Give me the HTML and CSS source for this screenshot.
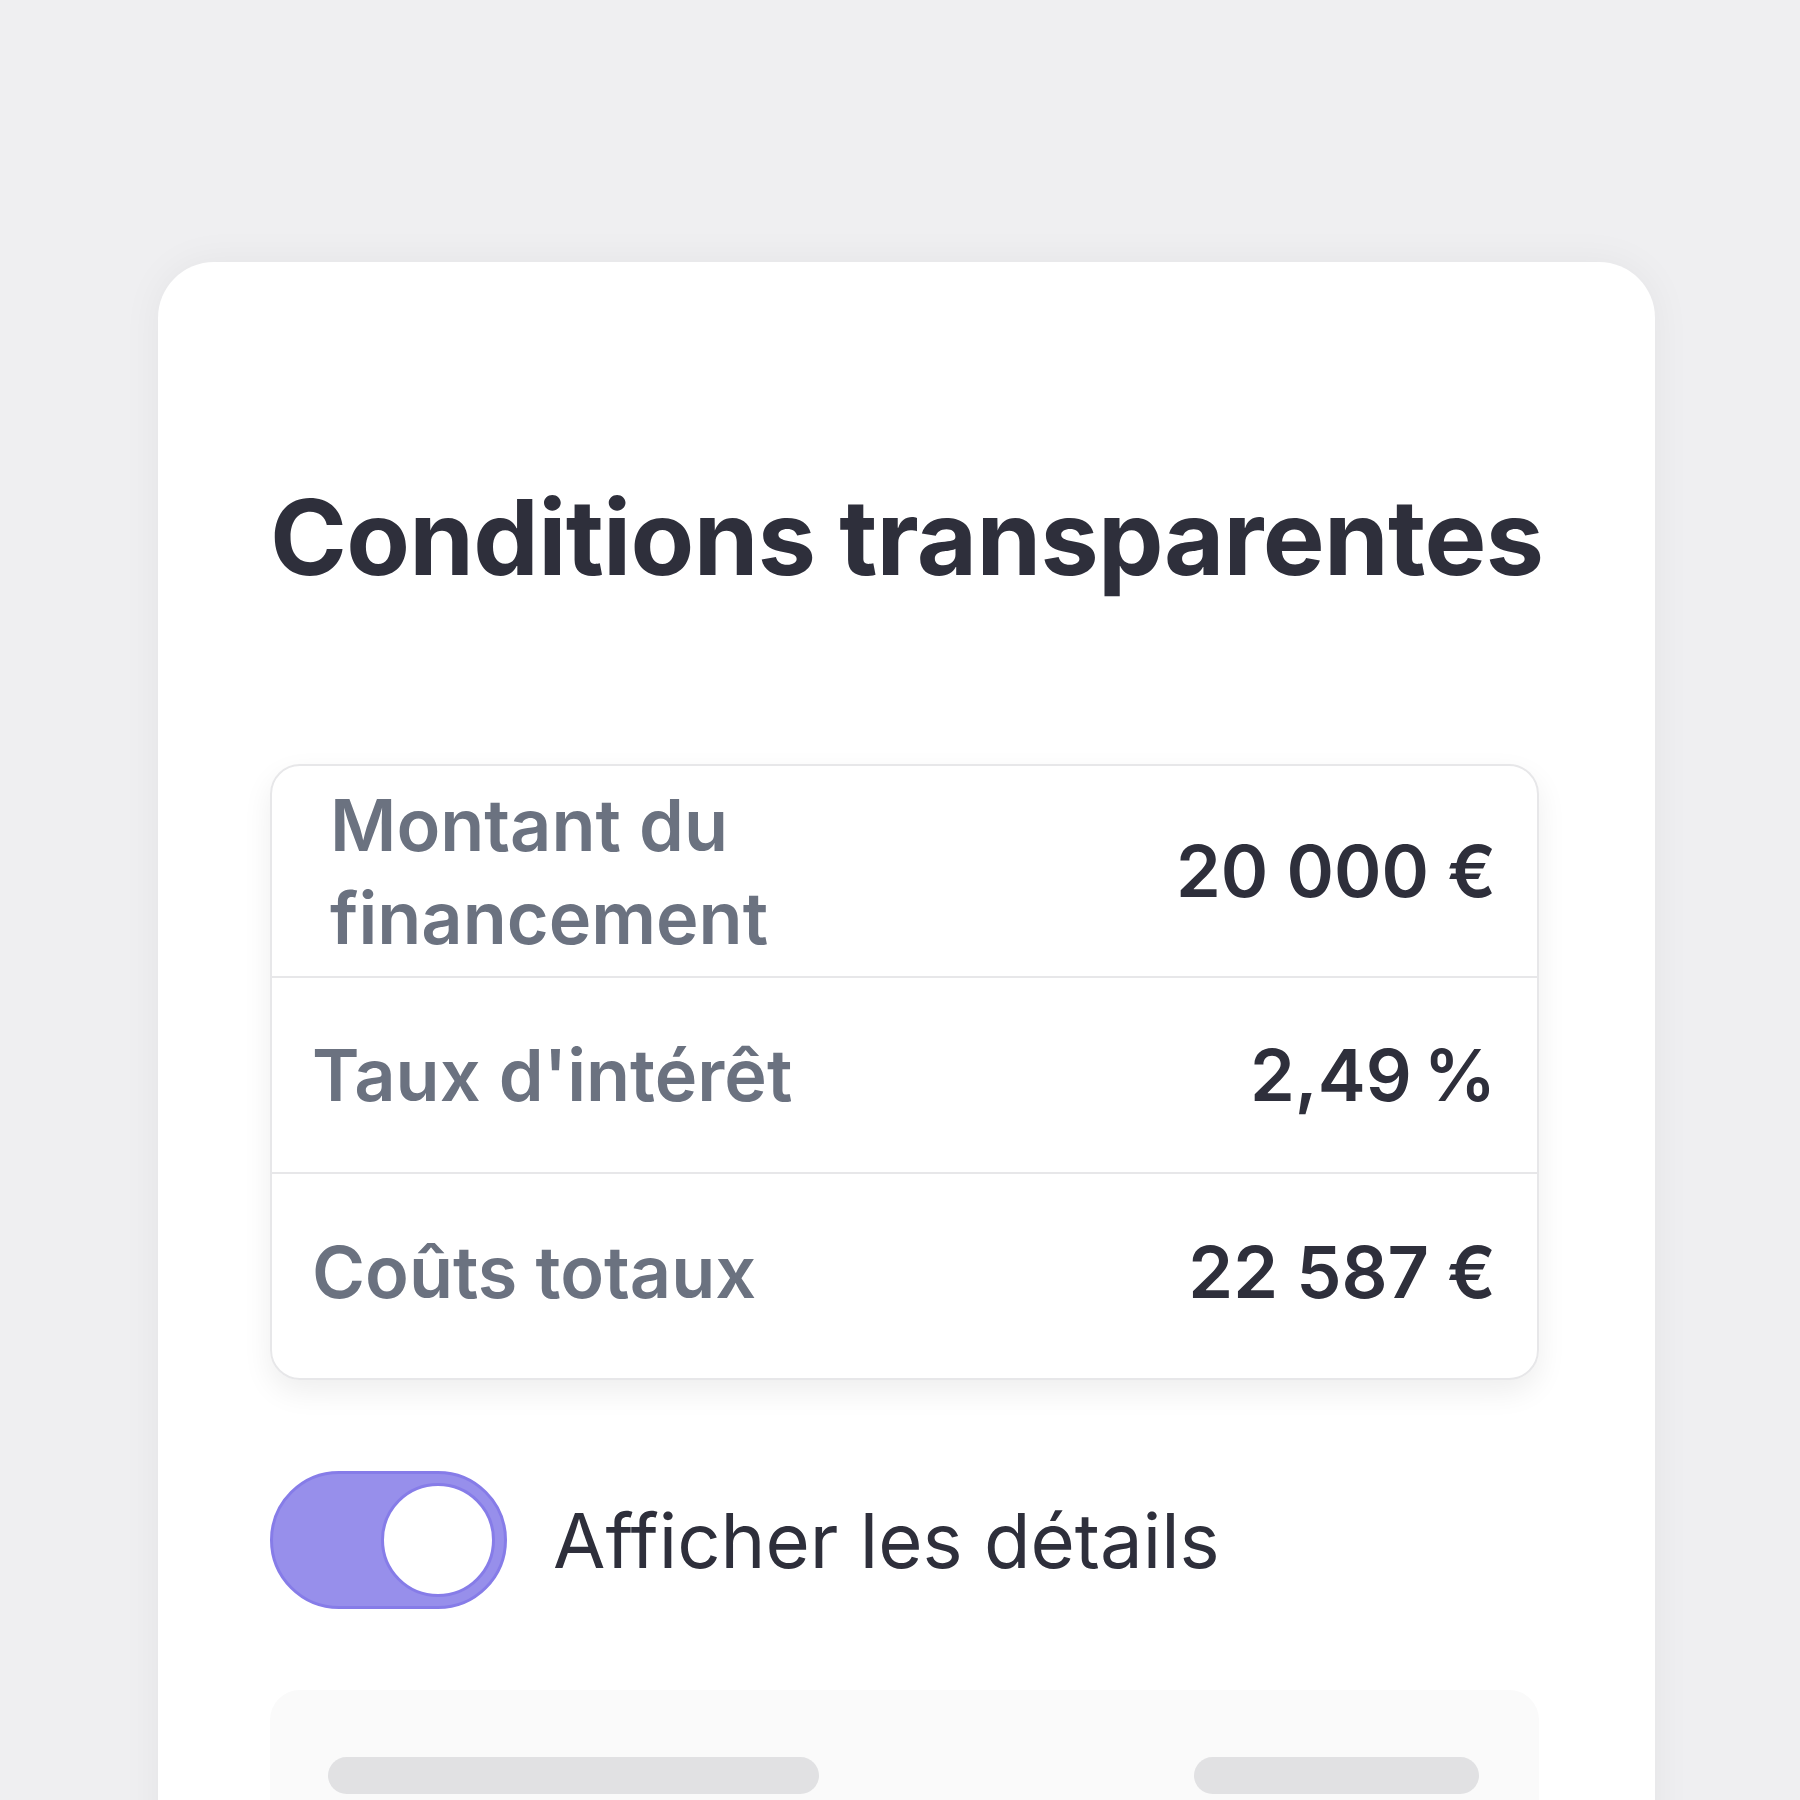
FILE: index.html
```html
<!DOCTYPE html>
<html>
<head>
  <title>Conditions transparentes</title>
  <link rel="stylesheet" href="styles.css">
</head>
<body>
  <div class="card">
    <h1>Conditions transparentes</h1>

    <div class="terms">
      <div class="row first">
        <span class="label">Montant du<br>financement</span>
        <span class="value">20 000 €</span>
      </div>
      <div class="row">
        <span class="label">Taux d'intérêt</span>
        <span class="value">2,49&#8239;%</span>
      </div>
      <div class="row last">
        <span class="label">Coûts totaux</span>
        <span class="value">22 587 €</span>
      </div>
    </div>

    <div class="details-toggle">
      <div class="switch on">
        <div class="knob"></div>
      </div>
      <span class="switch-label">Afficher les détails</span>
    </div>

    <div class="details">
      <div class="placeholder wide"></div>
      <div class="placeholder narrow"></div>
    </div>
  </div>
</body>
</html>
```

FILE: styles.css
```css
body {
  margin: 0;
  padding: 0;
  background-color: #efeff1;
  font-family: Inter, "Noto Sans", sans-serif;
  color: #2e2f3b;
  overflow: hidden;
}

.card {
  width: 1497px;
  min-height: 1700px;
  margin: 262px 0 0 158px;
  padding: 213px 116px 0 112px;
  box-sizing: border-box;
  background-color: #fff;
  border-radius: 56px;
  box-shadow: 0 0 40px rgba(0, 0, 0, 0.05);
}

h1 {
  margin: 0;
  font-size: 104px;
  font-weight: 700;
  line-height: 1.2;
  letter-spacing: -0.7px;
  white-space: nowrap;
  color: #2e2f3b;
}

.terms {
  margin-top: 164px;
  border: 2px solid #e7e7e9;
  border-radius: 30px;
  box-shadow: 0 12px 30px rgba(0, 0, 0, 0.07);
  overflow: hidden;
}

.row {
  display: flex;
  align-items: center;
  justify-content: space-between;
  min-height: 196px;
  padding: 0 41px 0 40px;
  box-sizing: border-box;
  border-top: 2px solid #e7e7e9;
}

.row.first {
  border-top: none;
  min-height: 210px;
  padding: 12px 41px 12px 58px;
}

.row.last {
  min-height: 206px;
  padding-bottom: 8px;
}

.label {
  font-size: 72px;
  font-weight: 600;
  line-height: 93px;
  color: #6b7280;
}

.value {
  font-size: 72px;
  font-weight: 600;
  line-height: 93px;
  color: #2e2f3b;
}

.details-toggle {
  display: flex;
  align-items: center;
  gap: 46px;
  margin-top: 91px;
}

.switch {
  display: flex;
  align-items: center;
  justify-content: flex-end;
  width: 237px;
  height: 138px;
  padding: 0 9px;
  box-sizing: border-box;
  border: 3px solid #867ce8;
  border-radius: 69px;
  background-color: #978feb;
}

.knob {
  width: 114px;
  height: 114px;
  box-sizing: border-box;
  border: 3px solid #867ce8;
  border-radius: 50%;
  background-color: #fff;
}

.switch-label {
  font-size: 76px;
  font-weight: 400;
  color: #2e2f3b;
}

.details {
  display: flex;
  justify-content: space-between;
  margin-top: 81px;
  height: 300px;
  padding: 67px 60px 0 58px;
  box-sizing: border-box;
  background-color: #fafafa;
  border-radius: 30px;
}

.placeholder {
  height: 37px;
  border-radius: 19px;
  background-color: #e1e1e3;
}

.placeholder.wide {
  width: 491px;
}

.placeholder.narrow {
  width: 285px;
}
```
